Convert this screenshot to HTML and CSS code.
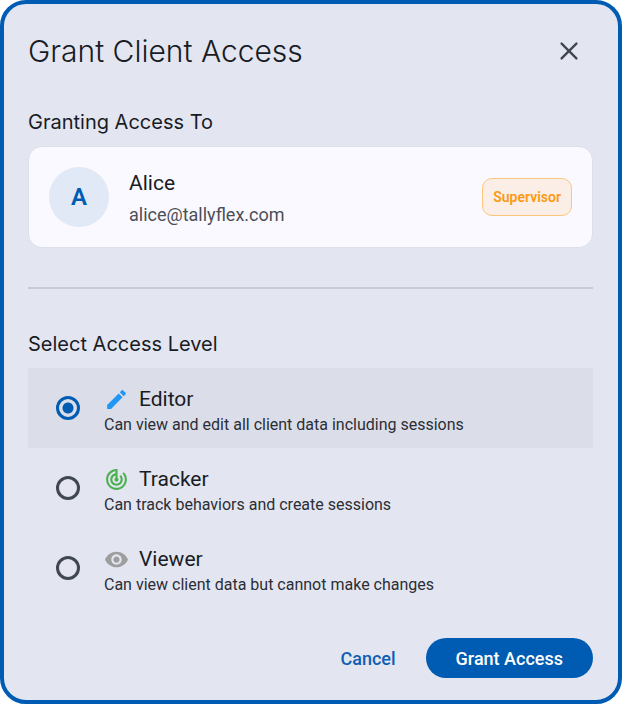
FILE: index.html
```
<!DOCTYPE html>
<html lang="en">
<head>
    <meta charset="UTF-8">
    <meta name="viewport" content="width=device-width, initial-scale=1.0">
    <title>Grant Client Access</title>
    <link rel="stylesheet" href="styles.css">
</head>
<body>
    <form class="dialog" method="post">
        <header class="dialog-header">
            <h1>Grant Client Access</h1>
            <button type="button" class="close-btn" aria-label="Close">
                <svg width="24" height="24" viewBox="0 0 24 24" fill="none" stroke="currentColor" stroke-width="2.4" stroke-linecap="round">
                    <path d="M4.6 4.6l14.8 14.8M19.4 4.6L4.6 19.4"/>
                </svg>
            </button>
        </header>

        <h2>Granting Access To</h2>
        <section class="user-card">
            <div class="avatar">A</div>
            <div class="user-info">
                <div class="user-name">Alice</div>
                <div class="user-email">alice@tallyflex.com</div>
            </div>
            <span class="badge">Supervisor</span>
        </section>

        <hr class="divider">

        <fieldset class="levels">
            <legend>Select Access Level</legend>

            <label class="level" for="level_editor">
                <input type="radio" id="level_editor" name="access_level" value="editor" checked>
                <span class="level-text">
                    <span class="level-name">
                        <svg class="icon-editor" width="25" height="25" viewBox="0 0 24 24" fill="currentColor">
                            <path d="M3 17.25V21h3.75L17.81 9.94l-3.75-3.75L3 17.25zM20.71 7.04c.39-.39.39-1.02 0-1.41l-2.34-2.34c-.39-.39-1.02-.39-1.41 0l-1.83 1.83 3.75 3.75 1.83-1.83z"/>
                        </svg>
                        Editor
                    </span>
                    <span class="level-desc">Can view and edit all client data including sessions</span>
                </span>
            </label>

            <label class="level" for="level_tracker">
                <input type="radio" id="level_tracker" name="access_level" value="tracker">
                <span class="level-text">
                    <span class="level-name">
                        <svg class="icon-tracker" width="25" height="25" viewBox="0 0 24 24" fill="currentColor">
                            <path d="M19.07 4.93l-1.41 1.41C19.1 7.79 20 9.79 20 12c0 4.42-3.58 8-8 8s-8-3.58-8-8c0-4.08 3.05-7.44 7-7.93v2.02C8.16 6.57 6 9.03 6 12c0 3.31 2.69 6 6 6s6-2.69 6-6c0-1.66-.67-3.16-1.76-4.24l-1.41 1.41C15.55 9.9 16 10.9 16 12c0 2.21-1.79 4-4 4s-4-1.79-4-4c0-1.86 1.28-3.41 3-3.86v2.14c-.6.35-1 .98-1 1.72 0 1.1.9 2 2 2s2-.9 2-2c0-.74-.4-1.38-1-1.72V2h-1C6.48 2 2 6.48 2 12s4.48 10 10 10 10-4.48 10-10c0-2.76-1.12-5.26-2.93-7.07z"/>
                        </svg>
                        Tracker
                    </span>
                    <span class="level-desc">Can track behaviors and create sessions</span>
                </span>
            </label>

            <label class="level" for="level_viewer">
                <input type="radio" id="level_viewer" name="access_level" value="viewer">
                <span class="level-text">
                    <span class="level-name">
                        <svg class="icon-viewer" width="25" height="25" viewBox="0 0 24 24" fill="currentColor">
                            <path d="M12 4.5C7 4.5 2.73 7.61 1 12c1.73 4.39 6 7.5 11 7.5s9.27-3.11 11-7.5c-1.73-4.39-6-7.5-11-7.5zM12 17c-2.76 0-5-2.24-5-5s2.24-5 5-5 5 2.24 5 5-2.24 5-5 5zm0-8c-1.66 0-3 1.34-3 3s1.34 3 3 3 3-1.34 3-3-1.34-3-3-3z"/>
                        </svg>
                        Viewer
                    </span>
                    <span class="level-desc">Can view client data but cannot make changes</span>
                </span>
            </label>
        </fieldset>

        <footer class="actions">
            <button type="button" class="cancel-btn">Cancel</button>
            <button type="submit" class="grant-btn">Grant Access</button>
        </footer>
    </form>
</body>
</html>
```
FILE: styles.css
```
* {
    box-sizing: border-box;
}

body {
    margin: 0;
    padding-right: 1px;
    background-color: #fff;
    color: #191c24;
    font-family: Roboto, sans-serif;
}

.dialog {
    padding: 23px 25px 22px 24px;
    background-color: #e3e6f1;
    border: 4px solid #005cb2;
    border-radius: 26px;
}

.dialog-header {
    display: flex;
    align-items: center;
    justify-content: space-between;
}

h1,
h2,
legend {
    margin: 0;
    padding: 0;
    font-family: Inter, sans-serif;
    font-weight: 400;
}

h1 {
    font-size: 30px;
    font-weight: 300;
    line-height: 40px;
}

h2,
legend {
    font-size: 20px;
    line-height: 24px;
}

h2 {
    margin: 35px 0 12px;
}

button {
    border: none;
    background: none;
    font-family: inherit;
    cursor: pointer;
}

.close-btn {
    display: flex;
    align-items: center;
    justify-content: center;
    width: 48px;
    height: 48px;
    padding: 0;
    color: #414752;
}

.user-card {
    display: flex;
    align-items: center;
    gap: 20px;
    padding: 18px 20px;
    background-color: #faf9ff;
    border: 1px solid #dcdfe9;
    border-radius: 14px;
}

.avatar {
    display: flex;
    align-items: center;
    justify-content: center;
    width: 60px;
    height: 60px;
    border-radius: 50%;
    background-color: #e0e9f5;
    color: #005cb2;
    font-size: 24px;
    font-weight: 600;
}

.user-info {
    display: flex;
    flex: 1;
    flex-direction: column;
    gap: 4px;
    padding-top: 4px;
}

.user-name {
    font-size: 21px;
    line-height: 28px;
}

.user-email {
    color: #4b4e56;
    font-size: 18px;
    line-height: 28px;
}

.badge {
    padding: 0 10px;
    border: 1px solid #fcc67c;
    border-radius: 10px;
    background-color: #faeee6;
    color: #fb9a15;
    font-size: 14px;
    font-weight: 600;
    line-height: 36px;
}

.divider {
    height: 2px;
    margin: 39px 0 43px;
    border: none;
    background-color: #c6c9d7;
}

.levels {
    min-width: 0;
    margin: 0;
    padding: 0;
    border: none;
}

legend {
    margin-bottom: 12px;
}

.level {
    display: flex;
    align-items: center;
    gap: 24px;
    height: 80px;
    padding: 0 28px;
    cursor: pointer;
}

.level:has(input:checked) {
    background-color: #dbdee8;
}

.level input {
    appearance: none;
    flex: none;
    width: 24px;
    height: 24px;
    margin: 0;
    border: 3px solid #414752;
    border-radius: 50%;
}

.level input:checked {
    border-color: #005cb2;
    background: radial-gradient(circle, #005cb2 5px, transparent 6px);
}

.level-text {
    padding-top: 6px;
}

.level-name {
    display: flex;
    align-items: center;
    gap: 10px;
    font-size: 21px;
    line-height: 28px;
}

.level-desc {
    display: block;
    color: #2b2e36;
    font-size: 16px;
    line-height: 24px;
}

.icon-editor {
    color: #2196f3;
}

.icon-tracker {
    color: #4caf50;
}

.icon-viewer {
    color: #9e9e9e;
}

.actions {
    display: flex;
    justify-content: flex-end;
    margin-top: 30px;
}

.cancel-btn,
.grant-btn {
    height: 40px;
    padding: 0 30px;
    border-radius: 20px;
    color: #0e5fb4;
    font-size: 18px;
    font-weight: 500;
}

.grant-btn {
    background-color: #005cb2;
    color: #fff;
}
```
